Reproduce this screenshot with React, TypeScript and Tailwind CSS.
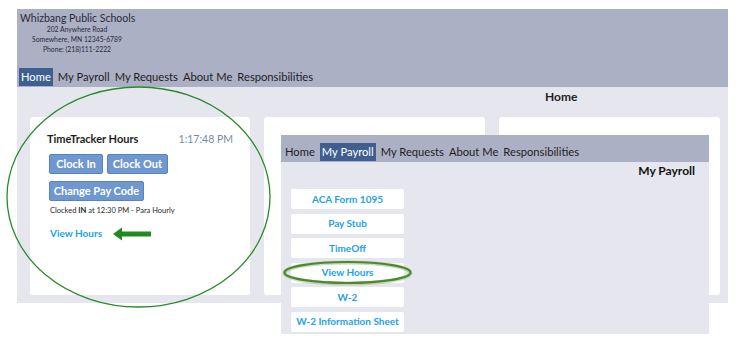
import React from 'react';

const navItems = ['Home', 'My Payroll', 'My Requests', 'About Me', 'Responsibilities'];

const payrollLinks = [
  'ACA Form 1095',
  'Pay Stub',
  'TimeOff',
  'View Hours',
  'W-2',
  'W-2 Information Sheet',
];

function NavBar({ active, className }: { active: string; className?: string }) {
  return (
    <div className={`flex items-center gap-[5px] text-[11.2px] text-[#1e1e1e] ${className ?? ''}`}>
      {navItems.map((item) => (
        <span
          key={item}
          className={
            item === active
              ? 'bg-[#3f5f90] text-white px-[2px] leading-[18px]'
              : 'leading-[18px]'
          }
        >
          {item}
        </span>
      ))}
    </div>
  );
}

function BlueButton({ label, width }: { label: string; width: string }) {
  return (
    <div
      className={`${width} h-5 flex items-center justify-center rounded-[2px] bg-[#6f97d0] border border-[#5a83bd] text-white text-[11px] font-bold`}
    >
      {label}
    </div>
  );
}

export default function App() {
  return (
    <div className="relative w-[745px] h-[345px] bg-white overflow-hidden font-['Lato','Open_Sans',sans-serif]">
      <div className="ml-[17px] mt-[9px] w-[711px]">
        {/* header */}
        <div className="h-[78px] bg-[#abb0c5] flex flex-col">
          <div className="pl-[3px] pt-[3px] text-[10.5px] leading-[13px] text-[#2a2a3a]">
            Whizbang Public Schools
          </div>
          <div className="w-[114px] ml-[3px] -mt-[1px] text-center text-[6.8px] leading-[10px] text-[#2a2a3a]">
            <div>202 Anywhere Road</div>
            <div>Somewhere, MN 12345-6789</div>
            <div>Phone: (218)111-2222</div>
          </div>
          <NavBar active="Home" className="mt-auto mb-[1px] pl-[2px]" />
        </div>

        {/* content */}
        <div className="h-[216px] bg-[#e6e6ef] pt-[2px]">
          <div className="pl-[528px] text-[12px] font-bold text-[#1e1e1e] leading-[16px]">Home</div>
          <div className="flex gap-[14px] pl-[13px] mt-[12px]">
            <div className="w-[220px] h-[178px] bg-white rounded-[3px] pt-[15px] pl-[17px] pr-[17px]">
              <div className="flex justify-between items-center leading-[14px]">
                <span className="text-[11px] font-bold text-[#1e1e1e]">TimeTracker Hours</span>
                <span className="text-[10.5px] text-[#7c88a8]">1:17:48 PM</span>
              </div>
              <div className="flex gap-[4px] mt-[8px] pl-[2px]">
                <BlueButton label="Clock In" width="w-[54px]" />
                <BlueButton label="Clock Out" width="w-[61px]" />
              </div>
              <div className="mt-[7px] pl-[2px]">
                <BlueButton label="Change Pay Code" width="w-[95px]" />
              </div>
              <div className="mt-[5px] pl-[3px] text-[7.5px] text-[#2a2a2a] leading-[10px]">
                Clocked <b>IN</b> at 12:30 PM - Para Hourly
              </div>
              <div className="mt-[11px] pl-[3px] text-[10px] font-bold text-[#22a2ec] leading-[12px]">
                View Hours
              </div>
            </div>
            <div className="w-[221px] h-[178px] bg-white rounded-[3px]" />
            <div className="w-[221px] h-[178px] bg-white rounded-[3px]" />
          </div>
        </div>
      </div>

      {/* overlay: My Payroll screen */}
      <div className="absolute left-[281px] top-[135px] w-[428px] h-[199px] bg-[#e6e6ef] flex flex-col">
        <div className="h-[27px] bg-[#abb0c5] flex items-end pb-[1px]">
          <NavBar active="My Payroll" className="pl-[4px]" />
        </div>
        <div className="flex justify-end pr-[14px] mt-[1px] text-[12px] font-bold text-[#111] leading-[16px]">
          My Payroll
        </div>
        <div className="flex flex-col gap-[4.6px] pl-[10px] mt-[10px]">
          {payrollLinks.map((l) => (
            <div
              key={l}
              className="w-[113px] h-5 bg-white rounded-[2px] flex items-center justify-center text-[10px] font-bold text-[#22a2ec]"
            >
              {l}
            </div>
          ))}
        </div>
      </div>

      {/* annotations */}
      <svg className="absolute left-0 top-0 pointer-events-none" width="745" height="345">
        <ellipse cx="138.5" cy="197" rx="131.5" ry="110" fill="none" stroke="#2a8a2a" strokeWidth="1.3" />
        <path d="M151 231.5 H122 V227.5 L113 234 L122 240.5 V236.5 H151 Z" fill="#1f8a1f" />
        <ellipse cx="347.5" cy="273" rx="63" ry="10.5" fill="none" stroke="#9bb58a" strokeWidth="4" opacity="0.5" />
        <ellipse cx="347.5" cy="272.5" rx="63" ry="10.5" fill="none" stroke="#4b8a2c" strokeWidth="2.2" />
      </svg>
    </div>
  );
}
